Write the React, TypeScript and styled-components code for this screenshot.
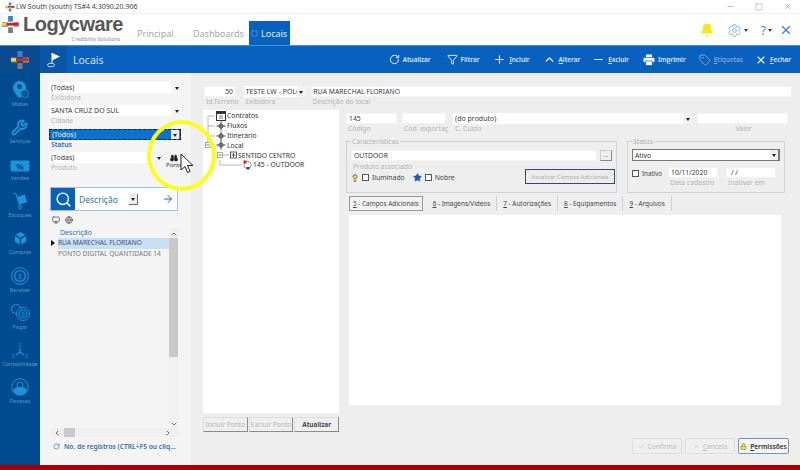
import React from "react";
import styled, { createGlobalStyle } from "styled-components";
import { RotateCw, Funnel, Plus, ChevronUp, ChevronDown, Minus, Tag, X, Square, Binoculars, ArrowRight, Search, Lock, Check, Box, Wrench, ChevronLeft, ChevronRight, Settings, Bell, Monitor, Globe, Star, Lightbulb } from "lucide-react";

const Global = createGlobalStyle`
  html, body { margin: 0; padding: 0; width: 800px; height: 470px; overflow: hidden; background: #fff; }
  * { box-sizing: border-box; }
  body { font-family: "Noto Sans", "Liberation Sans", sans-serif; font-size: 7px; color: #333; }
`;

const Page = styled.div`width: 800px; height: 470px; display: flex; flex-direction: column; overflow: hidden; position: relative;`;
const TitleBar = styled.div`height: 14px; flex: none; display: flex; align-items: center; padding: 0 8px 0 5px; gap: 1px; font-size: 7px; line-height: 10px; color: #444; border-bottom: 1px solid #f0f0f0;`;
const TitleText = styled.span`flex: 1;`;
const WinButtons = styled.div`display: flex; gap: 20px; color: #555; align-items: center;`;
const Header = styled.div`height: 31px; flex: none; display: flex; align-items: flex-end; background: #fff; padding-right: 7px;`;
const LogoBox = styled.div`width: 122px; height: 31px; position: relative; display: flex; align-items: flex-start; padding: 1px 0 0 1px;`;
const LogoWord = styled.div`font-family: "Liberation Sans", sans-serif; font-weight: 700; font-size: 20px; line-height: 19px; color: #58585a; letter-spacing: -0.5px; margin-left: 3px;`;
const LogoSub = styled.div`position: absolute; right: 2px; bottom: 3px; font-size: 5.2px; line-height: 5px; color: #8a8a8a;`;
const Tabs = styled.div`display: flex; height: 24px; margin-left: 15px; flex: 1;`;
const Tab = styled.div<{ $active?: boolean; $w: number }>`
  width: ${p => p.$w}px; display: flex; align-items: center; justify-content: flex-start;
  gap: 3px; font-size: 9px; padding-left: ${p => p.$active ? "2px" : "0"};
  color: ${p => p.$active ? "#e3eefb" : "#a6a6a6"}; background: ${p => p.$active ? "#0860BF" : "transparent"};
`;
const HeadTools = styled.div`display: flex; align-items: center; gap: 13px; height: 31px; padding-top: 1px;`;
const Caret = styled.span`width: 0; height: 0; border: 2px solid transparent; border-top: 3px solid #63321f; margin: 2px 0 0 2px;`;
const HeadTool = styled.div<{ $tight?: boolean }>`display: flex; align-items: center; color: #3b86d8; font-size: 12px; margin-left: ${p => p.$tight ? "-6px" : "0"};`;

const Band = styled.div`height: 28px; flex: none; display: flex; background: #0860BF; border-top: 1px solid #4a8fd8;`;
const BandLogo = styled.div`width: 40px; background: #0a4a8f; display: flex; align-items: center; justify-content: center;`;
const BandFlag = styled.div`width: 27px; background: #0a55a6; display: flex; align-items: center; justify-content: center; color: #fff;`;
const BandTitle = styled.div`flex: 1; color: #cfe2f7; font-size: 10.5px; padding-left: 6px; display: flex; align-items: center;`;
const Toolbar = styled.div`display: flex; align-items: center; padding-right: 9px;`;
const ToolBtn = styled.div<{ $off?: boolean; $ml: number }>`display: flex; align-items: center; gap: 3px; margin-left: ${p => p.$ml}px; font-size: 6.4px; font-weight: 600; color: ${p => p.$off ? "#7fa6d6" : "#dbe8f7"}; u { text-decoration: underline; }`;

const Body = styled.div`flex: 1; display: flex; min-height: 0;`;
const Side = styled.div`width: 40px; flex: none; background: #004a8f; display: flex; flex-direction: column; align-items: center; padding-top: 3px;`;
const SideItem = styled.div`height: 37.1px; flex: none; display: flex; flex-direction: column; align-items: center; justify-content: flex-end; padding-bottom: 5px; gap: 1px; color: #1f93d8; font-size: 5.4px; span { color: #5f9acb; white-space: nowrap; }`;

const LeftPanel = styled.div`width: 151px; flex: none; background: #f4f4f4; padding: 9px 0 0 9px; display: flex; flex-direction: column; position: relative;`;
const Combo = styled.div<{ $sel?: boolean; $w?: number }>`
  width: ${p => p.$w ? p.$w + "px" : "132px"}; height: 11px; background: ${p => p.$sel ? "#0a72cf" : "#fff"};
  display: flex; align-items: center; padding-left: 2px; font-size: 7px; color: ${p => p.$sel ? "#e8f1fb" : "#3a3a3a"};
  border: ${p => p.$sel ? "1px dashed #123" : "none"}; white-space: nowrap; overflow: hidden;
`;
const ComboText = styled.span`flex: 1; overflow: hidden;`;
const Arrow = styled.span<{ $boxed?: boolean }>`
  width: 9px; height: 100%; flex: none; display: flex; align-items: center; justify-content: center;
  background: ${p => p.$boxed ? "#eee" : "#f3f3f3"}; border-right: ${p => p.$boxed ? "1px solid #777" : "none"};
  &::after { content: ""; border: 2.5px solid transparent; border-top: 3px solid #222; margin-top: 3px; }
`;
const Label = styled.div<{ $blue?: boolean; $center?: boolean }>`height: 10px; font-size: 6.8px; line-height: 9px; padding-left: 2px; text-align: ${p => p.$center ? "center" : "left"}; color: ${p => p.$blue ? "#1c6fb8" : "#b4b4b4"}; font-weight: ${p => p.$blue ? 600 : 400}; white-space: nowrap;`;
const FieldStack = styled.div<{ $mb?: number }>`margin-bottom: ${p => p.$mb ?? 2}px;`;
const ProdRow = styled.div`display: flex; gap: 3px;`;
const PontoBtn = styled.div`display: flex; flex-direction: column; align-items: center; font-size: 6px; color: #333; line-height: 7px; margin-top: 2px;`;
const SearchBox = styled.div`width: 128px; height: 24px; margin: 12px 0 0 1px; display: flex; align-items: center; background: #fff; border: 1px solid #9cc0e6; flex: none;`;
const SearchIcon = styled.div`width: 24px; height: 100%; background: #0b60b8; color: #fff; display: flex; align-items: center; justify-content: center;`;
const SearchLabel = styled.div`width: 54px; color: #2f6fb3; font-size: 8.5px; padding-left: 4px;`;
const SearchDrop = styled.div`width: 9px; height: 11px; background: #eee; border-right: 1px solid #666; border-bottom: 1px solid #666; display: flex; align-items: center; justify-content: center; &::after { content: ""; border: 2px solid transparent; border-top: 3px solid #222; margin-top: 3px; }`;
const SearchGo = styled.div`flex: 1; display: flex; justify-content: flex-end; padding-right: 3px; color: #1367bd;`;
const MiniIcons = styled.div`display: flex; gap: 5px; padding: 0 0 0 3px; height: 17px; color: #444; align-items: center; flex: none;`;
const ListWrap = styled.div`width: 128px; margin-left: 1px; height: 209px; flex: none; display: grid; grid-template-columns: 119px 9px; grid-template-rows: 200px 9px;`;
const ListBody = styled.div`display: flex; flex-direction: column;`;
const ListHead = styled.div`height: 10px; margin-top: 0; padding-left: 10px; color: #2f6fb3; font-size: 7px; line-height: 10px;`;
const ListRow = styled.div<{ $sel?: boolean }>`height: 10.5px; line-height: 10.5px; font-size: 6.6px; padding-left: 8px; white-space: nowrap; position: relative; background-clip: content-box; background-color: ${p => p.$sel ? "#c9dff2" : "transparent"}; color: ${p => p.$sel ? "#35507a" : "#777"};`;
const RowMark = styled.span`position: absolute; left: 1px; top: 2px; border: 3px solid transparent; border-left: 4px solid #111;`;
const VScroll = styled.div`background: #f0f0f0; display: flex; flex-direction: column; align-items: center; color: #555; padding-top: 2px;`;
const VThumb = styled.div`width: 9px; height: 119px; background: #c9c9c9; margin-top: 0;`;
const Grow = styled.div`flex: 1;`;
const HScroll = styled.div`grid-column: 1 / 3; background: #f0f0f0; display: flex; align-items: center; color: #555; padding: 0 6px 0 3px;`;
const HThumb = styled.div`width: 11px; height: 9px; background: #c9c9c9; margin-left: 3px;`;
const ListFoot = styled.div`display: flex; align-items: center; gap: 4px; padding: 5px 0 0 4px; color: #3b6ea5; font-size: 6.7px; font-weight: 600; white-space: nowrap;`;

const RightPanel = styled.div`flex: 1; min-width: 0; background: #eeeeee; padding: 13px 0 0 12px; display: flex; flex-direction: column;`;
const TopRow = styled.div`display: flex; gap: 5px; padding-left: 1px;`;
const Input = styled.div<{ $w?: number; $right?: boolean; $h?: number }>`
  ${p => p.$w ? `width:${p.$w}px;` : "width:100%;"} height: ${p => p.$h ?? 11}px; background: #fff; display: flex; align-items: center; font-size: 6.8px; color: #3a3a3a;
  padding: 0 2px; justify-content: ${p => p.$right ? "flex-end" : "flex-start"}; border: 1px solid #f2f2f2; white-space: nowrap; overflow: hidden;
`;
const Main = styled.div`display: flex; gap: 7px; flex: 1; margin-top: 3px;`;
const TreeCol = styled.div`width: 136px; flex: none; display: flex; flex-direction: column;`;
const TreeBox = styled.div`height: 303px; background: #fff; flex: none; padding-top: 1px;`;
const TreeRow = styled.div`height: 9.8px; display: flex; align-items: center; font-size: 6.8px; color: #333; gap: 1px; white-space: nowrap;`;
const TreeBtns = styled.div`display: flex; gap: 1px; margin-top: 4px;`;
const TreeBtn = styled.div<{ $on?: boolean }>`width: 45px; height: 15px; display: flex; align-items: center; justify-content: center; background: #efefef; font-size: 6.6px; color: ${p => p.$on ? "#333" : "#b5b5b5"}; font-weight: ${p => p.$on ? 600 : 400}; border: 1px solid #ddd; border-right-color: #8a8a8a; border-bottom-color: #8a8a8a; white-space: nowrap;`;
const FormCol = styled.div`flex: 1; display: flex; flex-direction: column; padding-top: 3px;`;
const RowFields = styled.div`display: flex; gap: 5px;`;
const Fieldsets = styled.div`display: flex; gap: 10px; margin-top: 7px; width: 439px; flex: none;`;
const Fieldset = styled.div<{ $w: number }>`width: ${p => p.$w}px; height: 52px; flex: none; border: 1px solid #d2d2d2; position: relative; padding: 7px 4px 0 4px;`;
const Legend = styled.span`position: absolute; left: 4px; top: -5px; background: #eee; font-size: 6.8px; color: #b0b0b0; padding: 0 1px;`;
const InlineRow = styled.div<{ $mt?: number; $mb?: number }>`display: flex; align-items: center; gap: 3px; margin-top: ${p => p.$mt ?? 0}px; margin-bottom: ${p => p.$mb ?? 0}px;`;
const DotsBtn = styled.div`width: 12px; height: 11px; border: 1px solid #ccc; border-right-color: #888; border-bottom-color: #888; font-size: 6px; text-align: center; line-height: 9px; color: #777; flex: none;`;
const Check2 = styled.span`width: 7px; height: 7px; background: #fff; border: 1px solid #555; flex: none;`;
const CheckLabel = styled.span<{ $mr?: number; $small?: boolean }>`font-size: ${p => p.$small ? 6.2 : 6.8}px; color: #444; margin-right: ${p => p.$mr ?? 5}px;`;
const UpdateBtn = styled.div`position: absolute; right: 1px; bottom: 8px; width: 90px; height: 15px; border: 1px solid #3a4a5a; background: #ececec; color: #aaa; font-size: 5.8px; display: flex; align-items: center; justify-content: center; white-space: nowrap;`;
const StatusSelect = styled.div`height: 12px; background: #fff; border: 1px solid #777; display: flex; align-items: center; font-size: 6.8px; padding-left: 2px; color: #333;`;
const StatusRow = styled.div`display: flex; gap: 6px; margin-top: 6px; align-items: flex-start;`;
const DateCol = styled.div<{ $ml?: number }>`margin-left: ${p => p.$ml ?? 0}px;`;
const TabStrip = styled.div`display: flex; margin-top: 3px; height: 15px; padding-left: 3px; flex: none;`;
const PaneTab = styled.div<{ $on?: boolean }>`padding: 0 ${p => p.$on ? 3 : 6}px; display: flex; align-items: center; font-size: 6.4px; color: #444; white-space: nowrap; border-right: 1px solid #d0d0d0; ${p => p.$on ? "border: 1px solid #999; background: #f3f3f3; margin-right: 4px;" : ""} u { text-decoration: underline; }`;
const Pane = styled.div`margin: 4px 0 0 3px; width: 432px; height: 190px; background: #fff; flex: none;`;
const Bottom = styled.div`display: flex; justify-content: flex-end; gap: 3px; margin-top: 33px; width: 443px; flex: none;`;
const ActBtn = styled.div<{ $w: number; $on?: boolean }>`width: ${p => p.$w}px; height: 16px; border: 1px solid ${p => p.$on ? "#6f93bd" : "#ddd"}; border-radius: 2px; background: ${p => p.$on ? "#f6f6f6" : "#efefef"}; display: flex; align-items: center; justify-content: center; gap: 3px; font-size: 6.6px; color: ${p => p.$on ? "#333" : "#bbb"}; font-weight: ${p => p.$on ? 600 : 400}; u { text-decoration: underline; }`;
const RedBar = styled.div`height: 5px; background: #a80000; flex: none;`;
const Highlight = styled.div`position: absolute; left: 147px; top: 120px; width: 69px; height: 71px; border: 4px solid #fdfd1a; border-radius: 50%; pointer-events: none;`;
const Cursor = styled.svg`position: absolute; left: 180px; top: 153px; pointer-events: none;`;

const LogoMark = ({ s = 20 }: { s?: number }) => (
  <svg width={s} height={s} viewBox="0 0 20 20" style={{ flex: "none" }}>
    <path d="M7.5 1h5v6h-5z" fill="#3c82cf" />
    <path d="M7.5 13h5v6h-5z" fill="#7a7a7a" />
    <path d="M1 7.5h6v5H1z" fill="#8a8a8a" />
    <path d="M13 7.5h6v5h-6z" fill="#9a9a9a" />
    <path d="M1 8.2h5v3H1z" fill="#f6d93b" />
    <path d="M6 8.2h12.5v3H6z" fill="#c42a22" />
  </svg>
);

const PrinterIcon = () => (
  <svg width="12" height="12" viewBox="0 0 12 12" fill="#fff">
    <rect x="3" y="0.5" width="6" height="2.5" />
    <rect x="0.5" y="3.8" width="11" height="4.5" rx="1" />
    <rect x="2.8" y="7" width="6.4" height="4.5" stroke="#0860BF" strokeWidth="0.7" />
  </svg>
);

const Pin = () => (
  <svg width="19" height="19" viewBox="0 0 20 20">
    <path d="M9 1a7 7 0 0 1 7 7c0 4-5 10-7 11-2-1-7-7-7-11a7 7 0 0 1 7-7z" fill="#1f93d8" />
    <circle cx="9" cy="7" r="2.5" fill="#004a8f" />
    <circle cx="14.5" cy="14.5" r="4" fill="#004a8f" stroke="#1f93d8" />
    <path d="M12.7 14.5l1.3 1.3 2.3-2.4" stroke="#1f93d8" fill="none" />
  </svg>
);
const Percent = () => (
  <svg width="20" height="13" viewBox="0 0 20 13">
    <rect x="0.5" y="0.5" width="19" height="11" rx="1.5" fill="#1f93d8" />
    <text x="10" y="9.5" fontSize="8.5" fontWeight="700" textAnchor="middle" fill="#004a8f" fontFamily="Liberation Sans">%</text>
  </svg>
);
const Truck = () => (
  <svg width="18" height="18" viewBox="0 0 18 18" fill="none">
    <path d="M2 1l3 1 4 12" stroke="#1f93d8" strokeWidth="1.2" />
    <circle cx="9" cy="15.5" r="1.6" stroke="#1f93d8" />
    <rect x="7" y="3.5" width="8" height="8" transform="rotate(-15 11 7)" fill="#1f93d8" />
  </svg>
);
const Coin = () => (
  <svg width="18" height="18" viewBox="0 0 18 18" fill="none" stroke="#1f93d8">
    <circle cx="9" cy="9" r="8.3" />
    <circle cx="9" cy="9" r="5.4" strokeWidth="1.4" />
    <text x="9" y="11.6" fontSize="7" textAnchor="middle" fill="#1f93d8" stroke="none" fontFamily="Liberation Sans">$</text>
  </svg>
);
const CoinGear = () => (
  <svg width="20" height="18" viewBox="0 0 20 18" fill="none" stroke="#1f93d8">
    <circle cx="6" cy="5" r="4.5" strokeDasharray="2 1" strokeWidth="1.4" />
    <circle cx="13" cy="10" r="6.5" fill="#004a8f" />
    <circle cx="13" cy="10" r="4" />
    <text x="13" y="12.4" fontSize="6" textAnchor="middle" fill="#1f93d8" stroke="none" fontFamily="Liberation Sans">$</text>
  </svg>
);
const Sss = () => (
  <svg width="18" height="16" viewBox="0 0 18 16">
    <path d="M9 5v4M9 9l-4 3M9 9l4 3" stroke="#1f93d8" strokeWidth="1.2" />
    <text x="9" y="4" fontSize="4.5" textAnchor="middle" fill="#1f93d8" fontFamily="Liberation Sans">S</text>
    <text x="2.5" y="15" fontSize="4.5" textAnchor="middle" fill="#1f93d8" fontFamily="Liberation Sans">S</text>
    <text x="15.5" y="15" fontSize="4.5" textAnchor="middle" fill="#1f93d8" fontFamily="Liberation Sans">S</text>
  </svg>
);
const Person = () => (
  <svg width="18" height="18" viewBox="0 0 18 18" fill="none">
    <circle cx="9" cy="9" r="8.3" stroke="#1f93d8" />
    <circle cx="9" cy="7" r="3" stroke="#1f93d8" />
    <path d="M2.2 13c0-3 3-4 6.8-4s6.8 1 6.8 4c-1.5 2.6-4 4-6.8 4s-5.3-1.4-6.8-4z" fill="#1f93d8" />
  </svg>
);

const Guide = ({ w, lines, box }: { w: number; lines: string; box?: number }) => (
  <svg width={w} height="10" viewBox={`0 0 ${w} 10`} style={{ flex: "none" }} fill="none">
    <path d={lines} stroke="#999" strokeWidth="0.7" />
    {box !== undefined && (
      <g>
        <rect x={box} y="2.5" width="5" height="5" fill="#fff" stroke="#888" strokeWidth="0.7" />
        <path d={`M${box + 1} 5h3`} stroke="#333" strokeWidth="0.7" />
      </g>
    )}
  </svg>
);
const NodeIcon = () => (
  <svg width="10" height="10" viewBox="0 0 10 10" style={{ flex: "none" }}>
    <path d="M5 0.5v9M0.5 5h9" stroke="#444" strokeWidth="1" />
    <circle cx="5" cy="5" r="2.2" fill="#777" stroke="#333" strokeWidth="0.5" />
  </svg>
);
const ContractIcon = () => (
  <svg width="10" height="10" viewBox="0 0 10 10" style={{ flex: "none" }}>
    <rect x="0.5" y="0.5" width="9" height="9" fill="#fff" stroke="#333" />
    <rect x="0.5" y="0.5" width="9" height="2.5" fill="#333" />
    <path d="M3 5h4M3 7h4" stroke="#555" strokeWidth="0.8" />
  </svg>
);
const GroupIcon = () => (
  <svg width="7" height="8" viewBox="0 0 7 8" style={{ flex: "none" }}>
    <rect x="0.5" y="1" width="6" height="6" fill="#fff" stroke="#333" strokeWidth="0.8" />
    <path d="M3.5 2v4M1.5 4h4" stroke="#333" strokeWidth="0.8" />
  </svg>
);
const SignIcon = () => (
  <svg width="9" height="10" viewBox="0 0 9 10" style={{ flex: "none" }}>
    <circle cx="4.5" cy="5" r="3.6" fill="#fff" stroke="#555" strokeWidth="0.6" />
    <rect x="0.5" y="0.5" width="3" height="3" fill="#c92a22" />
    <rect x="3.5" y="7" width="3" height="2.5" fill="#1c4ea8" />
  </svg>
);

const sideItems: [React.ReactNode, string][] = [
  [<Pin />, "Mídias"],
  [<Wrench size={17} strokeWidth={2.6} />, "Serviços"],
  [<Percent />, "Vendas"],
  [<Truck />, "Estoques"],
  [<Box size={17} fill="#1f93d8" stroke="#004a8f" />, "Compras"],
  [<Coin />, "Receber"],
  [<CoinGear />, "Pagar"],
  [<Sss />, "Contabilidade"],
  [<Person />, "Pessoas"],
];

const tools: [React.ReactNode, React.ReactNode, number, boolean?][] = [
  [<RotateCw size={11} color="#fff" />, "Atualizar", 0],
  [<Funnel size={11} color="#fff" />, "Filtrar", 16],
  [<Plus size={13} color="#fff" />, <><u>I</u>ncluir</>, 14],
  [<ChevronUp size={13} color="#fff" strokeWidth={2.4} />, <><u>A</u>lterar</>, 13],
  [<Minus size={13} color="#fff" />, <><u>E</u>xcluir</>, 12],
  [<PrinterIcon />, <>Im<u>p</u>rimir</>, 14],
  [<Tag size={12} color="#7fa6d6" />, <><u>E</u>tiquetas</>, 13, true],
  [<X size={12} color="#fff" strokeWidth={2.2} />, <><u>F</u>echar</>, 12],
];

export default function App() {
  return (
    <Page>
      <Global />
      <TitleBar>
        <LogoMark s={10} />
        <TitleText>LW South (south) TS#4 4.3090.20.906</TitleText>
        <WinButtons>
          <Minus size={9} strokeWidth={1} />
          <Square size={8} strokeWidth={1} />
          <X size={9} strokeWidth={1} />
        </WinButtons>
      </TitleBar>
      <Header>
        <LogoBox>
          <LogoMark s={19} />
          <LogoWord>Logycware</LogoWord>
          <LogoSub>Credibility Solutions</LogoSub>
        </LogoBox>
        <Tabs>
          <Tab $w={56}>Principal</Tab>
          <Tab $w={56}>Dashboards</Tab>
          <Tab $w={41} $active><Square size={7} strokeWidth={1} />Locais</Tab>
        </Tabs>
        <HeadTools>
          <HeadTool><Bell size={14} color="#f5e62a" fill="#f5e62a" /></HeadTool>
          <HeadTool><Settings size={15} strokeWidth={1} color="#4a90d9" /><Caret /></HeadTool>
          <HeadTool>?<Caret /></HeadTool>
          <HeadTool $tight><X size={14} strokeWidth={2} color="#2f7fd3" /></HeadTool>
        </HeadTools>
      </Header>
      <Band>
        <BandLogo><LogoMark s={20} /></BandLogo>
        <BandFlag>
          <svg width="15" height="16" viewBox="0 0 15 16" fill="none">
            <path d="M6 1v11" stroke="#fff" />
            <path d="M6 1l8 3.5-8 4z" fill="#fff" />
            <ellipse cx="5" cy="13" rx="3.5" ry="1.8" stroke="#bcd6f2" />
          </svg>
        </BandFlag>
        <BandTitle>Locais</BandTitle>
        <Toolbar>
          {tools.map(([icon, text, ml, off], i) => (
            <ToolBtn key={i} $off={off} $ml={ml}>{icon}<span>{text}</span></ToolBtn>
          ))}
        </Toolbar>
      </Band>
      <Body>
        <Side>
          {sideItems.map(([icon, label]) => (
            <SideItem key={label}>{icon}<span>{label}</span></SideItem>
          ))}
        </Side>
        <LeftPanel>
          <FieldStack $mb={2}>
            <Combo><ComboText>(Todas)</ComboText><Arrow /></Combo>
            <Label>Exibidora</Label>
          </FieldStack>
          <FieldStack $mb={3}>
            <Combo><ComboText>SANTA CRUZ DO SUL</ComboText><Arrow /></Combo>
            <Label>Cidade</Label>
          </FieldStack>
          <FieldStack $mb={2}>
            <Combo $sel><ComboText>(Todos)</ComboText><Arrow $boxed /></Combo>
            <Label $blue>Status</Label>
          </FieldStack>
          <ProdRow>
            <FieldStack>
              <Combo $w={114}><ComboText>(Todas)</ComboText><Arrow /></Combo>
              <Label>Produto</Label>
            </FieldStack>
            <PontoBtn><Binoculars size={8} color="#222" fill="#222" />Ponto</PontoBtn>
          </ProdRow>
          <SearchBox>
            <SearchIcon><Search size={17} strokeWidth={2} /></SearchIcon>
            <SearchLabel>Descrição</SearchLabel>
            <SearchDrop />
            <SearchGo><ArrowRight size={12} strokeWidth={2} /></SearchGo>
          </SearchBox>
          <MiniIcons><Monitor size={8} /><Globe size={8} /></MiniIcons>
          <ListWrap>
            <ListBody>
              <ListHead>Descrição</ListHead>
              <ListRow $sel><RowMark />RUA MARECHAL FLORIANO</ListRow>
              <ListRow>PONTO DIGITAL QUANTIDADE 14</ListRow>
            </ListBody>
            <VScroll>
              <ChevronUp size={8} strokeWidth={2.5} />
              <VThumb />
              <Grow />
              <ChevronDown size={8} strokeWidth={2.5} />
            </VScroll>
            <HScroll>
              <ChevronLeft size={8} strokeWidth={2.5} />
              <HThumb />
              <Grow />
              <ChevronRight size={8} strokeWidth={2.5} />
            </HScroll>
          </ListWrap>
          <ListFoot><RotateCw size={7} />No. de registros (CTRL+F5 ou cliq...</ListFoot>
        </LeftPanel>
        <RightPanel>
          <TopRow>
            <FieldStack $mb={0}>
              <Input $w={32} $right>50</Input>
              <Label>Id.Terreno</Label>
            </FieldStack>
            <FieldStack $mb={0}>
              <Combo $w={62}><ComboText>TESTE LW - POLO</ComboText><Arrow /></Combo>
              <Label>Exibidora</Label>
            </FieldStack>
            <FieldStack $mb={0}>
              <Input $w={481}>RUA MARECHAL FLORIANO</Input>
              <Label>Descrição do local</Label>
            </FieldStack>
          </TopRow>
          <Main>
            <TreeCol>
              <TreeBox>
                <TreeRow><Guide w={12} lines="M5 5h7M5 5v5" /><ContractIcon />Contratos</TreeRow>
                <TreeRow><Guide w={12} lines="M5 0v10M5 5h7" /><NodeIcon />Fluxos</TreeRow>
                <TreeRow><Guide w={12} lines="M5 0v10M5 5h7" /><NodeIcon />Itinerário</TreeRow>
                <TreeRow><Guide w={12} lines="M5 0v3M8 5h4" box={2.5} /><NodeIcon />Local</TreeRow>
                <TreeRow><Guide w={26} lines="M17 5h9" box={14.5} /><GroupIcon />SENTIDO CENTRO</TreeRow>
                <TreeRow><Guide w={39} lines="M17 0v5h22" /><SignIcon />145 - OUTDOOR</TreeRow>
              </TreeBox>
              <TreeBtns>
                <TreeBtn>Incluir Ponto</TreeBtn>
                <TreeBtn>Excluir Ponto</TreeBtn>
                <TreeBtn $on>Atualizar</TreeBtn>
              </TreeBtns>
            </TreeCol>
            <FormCol>
              <RowFields>
                <FieldStack $mb={0}>
                  <Input $w={51}>145</Input>
                  <Label>Código</Label>
                </FieldStack>
                <FieldStack $mb={0}>
                  <Input $w={44} />
                  <Label>Cód. exportaç</Label>
                </FieldStack>
                <FieldStack $mb={0}>
                  <Combo $w={239}><ComboText>(do produto)</ComboText><Arrow /></Combo>
                  <Label>C. Custo</Label>
                </FieldStack>
                <FieldStack $mb={0}>
                  <Input $w={91} />
                  <Label $center>Valor</Label>
                </FieldStack>
              </RowFields>
              <Fieldsets>
                <Fieldset $w={271}>
                  <Legend>Características</Legend>
                  <InlineRow $mt={1} $mb={1}>
                    <Input>OUTDOOR</Input>
                    <DotsBtn>...</DotsBtn>
                  </InlineRow>
                  <Label>Produto associado</Label>
                  <InlineRow $mt={1}>
                    <Lightbulb size={8} color="#333" fill="#f5e62a" />
                    <Check2 />
                    <CheckLabel>Iluminado</CheckLabel>
                    <Star size={9} color="#1c5fb0" fill="#1c5fb0" />
                    <Check2 />
                    <CheckLabel>Nobre</CheckLabel>
                  </InlineRow>
                  <UpdateBtn>Atualizar Campos Adicionais</UpdateBtn>
                </Fieldset>
                <Fieldset $w={158}>
                  <Legend>Status</Legend>
                  <StatusSelect><ComboText>Ativo</ComboText><Arrow $boxed /></StatusSelect>
                  <StatusRow>
                    <InlineRow $mt={2}><Check2 /><CheckLabel $mr={0} $small>Inativo</CheckLabel></InlineRow>
                    <DateCol>
                      <Input $w={50} $h={11}>10/11/2020</Input>
                      <Label>Data cadastro</Label>
                    </DateCol>
                    <DateCol $ml={2}>
                      <Input $w={50} $h={11}>&nbsp;/ /</Input>
                      <Label>Inativar em</Label>
                    </DateCol>
                  </StatusRow>
                </Fieldset>
              </Fieldsets>
              <TabStrip>
                <PaneTab $on><u>5</u>&nbsp;- Campos Adicionais</PaneTab>
                <PaneTab><u>6</u>&nbsp;- Imagens/Vídeos</PaneTab>
                <PaneTab><u>7</u>&nbsp;- Autorizações</PaneTab>
                <PaneTab><u>8</u>&nbsp;- Equipamentos</PaneTab>
                <PaneTab><u>9</u>&nbsp;- Arquivos</PaneTab>
              </TabStrip>
              <Pane />
              <Bottom>
                <ActBtn $w={50}><Check size={7} />Confirma</ActBtn>
                <ActBtn $w={50}><ChevronUp size={7} /><span><u>C</u>ancela</span></ActBtn>
                <ActBtn $w={51} $on><Lock size={7} fill="#f5e62a" color="#777" /><span><u>P</u>ermissões</span></ActBtn>
              </Bottom>
            </FormCol>
          </Main>
        </RightPanel>
      </Body>
      <RedBar />
      <Highlight />
      <Cursor width="14" height="21" viewBox="0 0 14 21">
        <path d="M1 1v16l4-3.5 2.5 6 2.5-1-2.5-6h5.5z" fill="#fff" stroke="#222" strokeWidth="1" />
      </Cursor>
    </Page>
  );
}
